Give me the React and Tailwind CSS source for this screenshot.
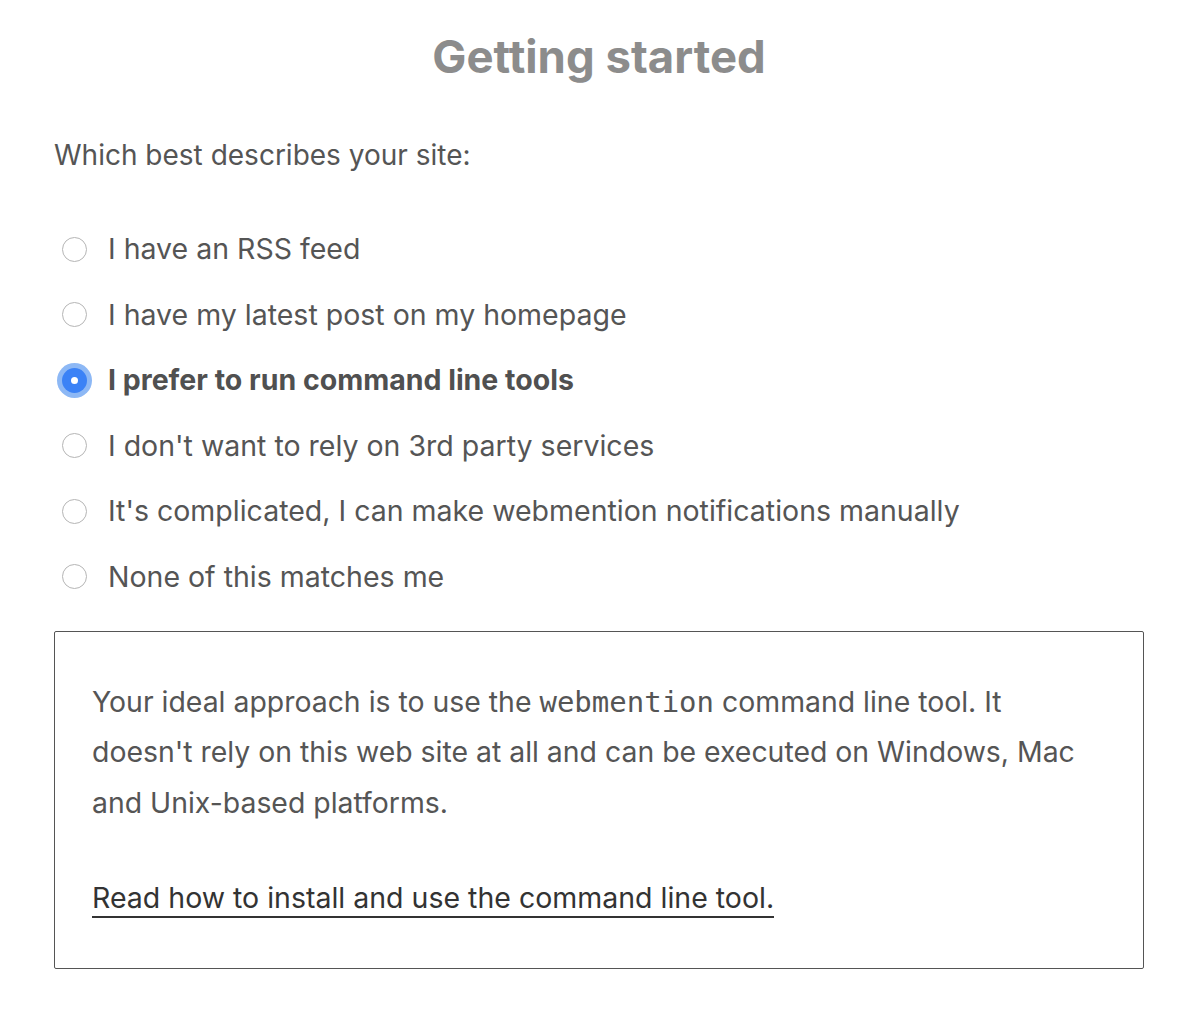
import React, { useState } from 'react';

const options = [
    'I have an RSS feed',
    'I have my latest post on my homepage',
    'I prefer to run command line tools',
    "I don't want to rely on 3rd party services",
    "It's complicated, I can make webmention notifications manually",
    'None of this matches me',
];

const App = () => {
    const [selected, setSelected] = useState(2);

    return (
        <div className="min-h-screen bg-white pl-[54px] pr-[56px] pt-[27px] text-[#555555]" style={{ fontFamily: 'Inter, "Noto Sans", sans-serif' }}>
            <h1 className="text-center text-[45.5px] font-bold leading-[60px] text-[#8c8c8c]">Getting started</h1>

            <p className="mt-[48px] text-[28px] leading-[40px]">Which best describes your site:</p>

            <div className="mt-[54px] flex flex-col gap-[25.5px]">
                {options.map((label, i) => (
                    <label key={i} className="flex cursor-pointer items-center gap-[21px] pl-[8px]" onClick={() => setSelected(i)}>
                        {selected === i ? (
                            <span className="flex h-[25px] w-[25px] items-center justify-center rounded-full bg-[#3b82f6] ring-[5px] ring-[#8db8f5]">
                                <span className="h-[7px] w-[7px] rounded-full bg-white" />
                            </span>
                        ) : (
                            <span className="h-[25px] w-[25px] rounded-full border border-[#b5b5b5] bg-white" />
                        )}
                        <span className={`text-[28.5px] leading-[40px] ${selected === i ? 'font-bold text-[#505050]' : ''}`}>{label}</span>
                    </label>
                ))}
            </div>

            <div className="mt-[34px] rounded-[2px] border-[1.5px] border-[#555555] pl-[37px] pr-[60px] pt-[45px] pb-[45px]">
                <p className="text-[28.4px] leading-[50.5px]">
                    Your ideal approach is to use the{' '}
                    <code className="text-[29px] leading-[40px]" style={{ fontFamily: '"DejaVu Sans Mono", monospace' }}>webmention</code>{' '}
                    command line tool. It doesn't rely on this web site at all and can be executed on Windows, Mac and Unix-based platforms.
                </p>
                <p className="mt-[45px] text-[28.5px] leading-[50px]">
                    <a href="#" className="border-b-2 border-[#333333] pb-[1px] text-[#333333]">Read how to install and use the command line tool.</a>
                </p>
            </div>
        </div>
    );
};

export default App;
